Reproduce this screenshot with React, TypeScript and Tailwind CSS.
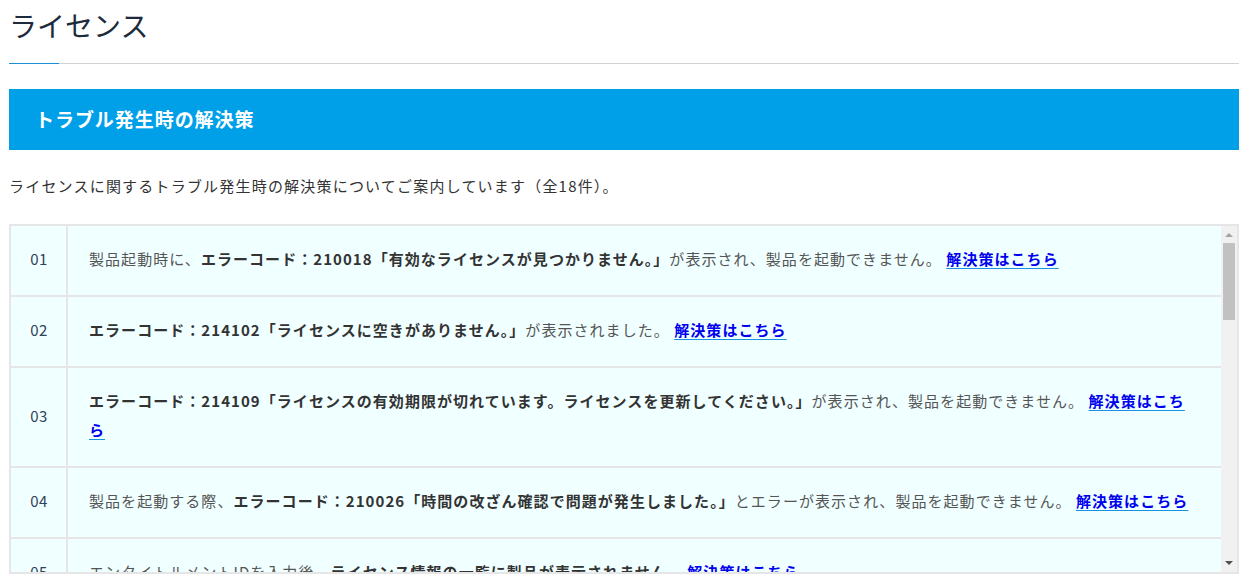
import React from 'react';

type Item = {
  pre?: string;
  bold: string;
  post?: string;
};

const items: Item[] = [
  { pre: '製品起動時に、', bold: 'エラーコード：210018「有効なライセンスが見つかりません。」', post: 'が表示され、製品を起動できません。' },
  { bold: 'エラーコード：214102「ライセンスに空きがありません。」', post: 'が表示されました。' },
  { bold: 'エラーコード：214109「ライセンスの有効期限が切れています。ライセンスを更新してください。」', post: 'が表示され、製品を起動できません。' },
  { pre: '製品を起動する際、', bold: 'エラーコード：210026「時間の改ざん確認で問題が発生しました。」', post: 'とエラーが表示され、製品を起動できません。' },
  { pre: 'エンタイトルメントIDを入力後、', bold: 'ライセンス情報の一覧に製品が表示されません。' },
  { pre: 'ライセンス認証時に、', bold: 'エラーコード：210003「サーバーに接続できません。」', post: 'が表示されました。' },
  { pre: 'オフライン環境で', bold: 'ライセンス認証ができません。' },
  { bold: 'エラーコード：214110「ライセンスの認証に失敗しました。」', post: 'が表示されました。' },
  { pre: 'PCを入れ替えた後、', bold: 'ライセンスを移行できません。' },
  { bold: 'エラーコード：210021「ライセンスファイルが破損しています。」', post: 'が表示され、製品を起動できません。' },
  { pre: 'ネットワークライセンスを使用中に、', bold: 'ライセンスサーバーが見つかりません。' },
  { bold: 'エラーコード：214105「ライセンスの返却に失敗しました。」', post: 'が表示されました。' },
  { pre: '製品のアップデート後に、', bold: 'ライセンスが無効になりました。' },
  { bold: 'エラーコード：210030「システム日付が不正です。」', post: 'が表示され、製品を起動できません。' },
  { pre: 'プロキシ環境で', bold: 'ライセンスのオンライン認証ができません。' },
  { bold: 'エラーコード：214120「ライセンスの種類が一致しません。」', post: 'が表示されました。' },
  { pre: '評価版から製品版へ切り替える際、', bold: 'ライセンスが反映されません。' },
  { bold: 'エラーコード：210040「ライセンスサービスが起動していません。」', post: 'が表示されました。' },
];

const jp = "font-['Noto_Sans_CJK_JP','Noto_Sans',sans-serif]";

// the browser here hides native scrollbars, so the classic one is drawn by hand
function Scrollbar() {
  return (
    <div className="flex w-[16px] shrink-0 flex-col bg-[#f1f1f1]">
      <div className="flex h-[17px] items-center justify-center">
        <svg width="8" height="5" viewBox="0 0 8 5">
          <path d="M0 5 L4 1 L8 5 Z" fill="#a3a3a3" />
        </svg>
      </div>
      <div className="mx-[2px] h-[77px] bg-[#c1c1c1]" />
      <div className="flex-1" />
      <div className="flex h-[17px] items-center justify-center">
        <svg width="8" height="5" viewBox="0 0 8 5">
          <path d="M0 0 L8 0 L4 4 Z" fill="#505050" />
        </svg>
      </div>
    </div>
  );
}

export default function App() {
  return (
    <div className={`${jp} bg-white px-[9px] w-[1248px]`}>
      <h1 className="pt-[4px] text-[28px] leading-[42px] font-normal text-[#1c2a3c]">ライセンス</h1>
      <div className="mt-[17px] flex">
        <div className="h-px w-[50px] bg-[#1b8fd6]" />
        <div className="h-px flex-1 bg-[#d2d2d2]" />
      </div>

      <div className="mt-[25px] flex h-[61px] items-center bg-[#00a0e9] px-[26px]">
        <h2 className="text-[19px] font-bold tracking-[0.05em] text-white">トラブル発生時の解決策</h2>
      </div>

      <p className="mt-[23px] text-[15px] leading-[25px] tracking-[0.08em] text-[#333]">
        ライセンスに関するトラブル発生時の解決策についてご案内しています（全18件）。
      </p>

      <div className="mt-[26px] flex h-[350px] border-2 border-[#e6e6e6]">
        <div className="flex-1 overflow-hidden">
          {items.map((item, i) => (
            <div key={i} className="flex border-b-2 border-[#e6e6e6] bg-[#f0ffff]">
              <div className="flex w-[57px] shrink-0 items-center justify-center border-r-2 border-[#e6e6e6] pb-[2px] pl-[1px] text-[15px] tracking-[0.03em] text-[#2f4256]">
                {String(i + 1).padStart(2, '0')}
              </div>
              <div className="flex-1 px-[21px] pt-[18px] pb-[22px] text-[15px] leading-[29px] tracking-[0.07em] text-[#555]">
                {item.pre}
                <strong className="font-bold text-[#333]">{item.bold}</strong>
                {item.post}{' '}
                <a
                  href="#"
                  className="font-bold text-[#0000ee] underline decoration-[#1a90e0] underline-offset-[3px]"
                >
                  解決策はこちら
                </a>
              </div>
            </div>
          ))}
        </div>
        <Scrollbar />
      </div>
    </div>
  );
}
